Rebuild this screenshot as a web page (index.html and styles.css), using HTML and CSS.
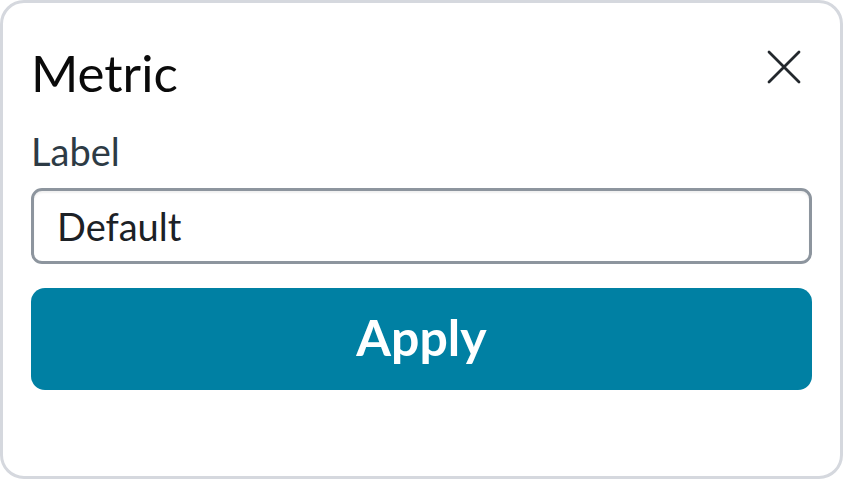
FILE: index.html
```html
<!DOCTYPE html>
<html lang="en">
<head>
<meta charset="utf-8">
<title>Metric</title>
<link rel="stylesheet" href="styles.css">
</head>
<body>
<div class="card">
  <div class="header">
    <h1 class="title">Metric</h1>
    <button class="close" aria-label="Close">
      <svg width="36" height="36" viewBox="0 0 36 36"><path d="M3 3 L33 33 M33 3 L3 33" stroke="#23282d" stroke-width="2.8" stroke-linecap="round" fill="none"/></svg>
    </button>
  </div>
  <label class="label" for="lbl">Label</label>
  <input id="lbl" class="field" type="text" value="Default">
  <button class="apply">Apply</button>
</div>
</body>
</html>
```
FILE: styles.css
```css
html, body {
  margin: 0;
  padding: 0;
  background: #ffffff;
}
body {
  font-family: Lato, "Noto Sans", sans-serif;
}
.card {
  box-sizing: border-box;
  width: 843px;
  height: 479px;
  border: 3px solid #d5d8de;
  border-radius: 24px;
  padding: 40px 28px 0 28px;
  display: flex;
  flex-direction: column;
}
.header {
  display: flex;
  align-items: center;
  justify-content: space-between;
  height: 60px;
}
.title {
  margin: 0;
  font-size: 51px;
  line-height: 60px;
  font-weight: 400;
  color: #0a0a0a;
}
.close {
  border: 0;
  background: none;
  padding: 0;
  margin: -12px 10px 0 0;
  width: 36px;
  height: 36px;
  display: flex;
}
.label {
  margin-top: 24px;
  font-size: 38px;
  line-height: 48px;
  color: #2d3b45;
}
.field {
  box-sizing: border-box;
  margin-top: 13px;
  width: 781px;
  height: 76px;
  border: 3px solid #8d959e;
  border-radius: 11px;
  padding: 0 0 0 23px;
  font-family: Lato, "Noto Sans", sans-serif;
  font-size: 38px;
  color: #1c2126;
  outline: none;
  background: #fff;
  box-shadow: inset 0 2px 2px rgba(0, 0, 0, 0.06);
}
.apply {
  margin-top: 24px;
  width: 781px;
  height: 102px;
  border: 0;
  border-radius: 14px;
  background: #0080a3;
  color: #ffffff;
  font-family: Lato, "Noto Sans", sans-serif;
  font-weight: 700;
  font-size: 50px;
  padding: 0 0 4px 0;
}
```
